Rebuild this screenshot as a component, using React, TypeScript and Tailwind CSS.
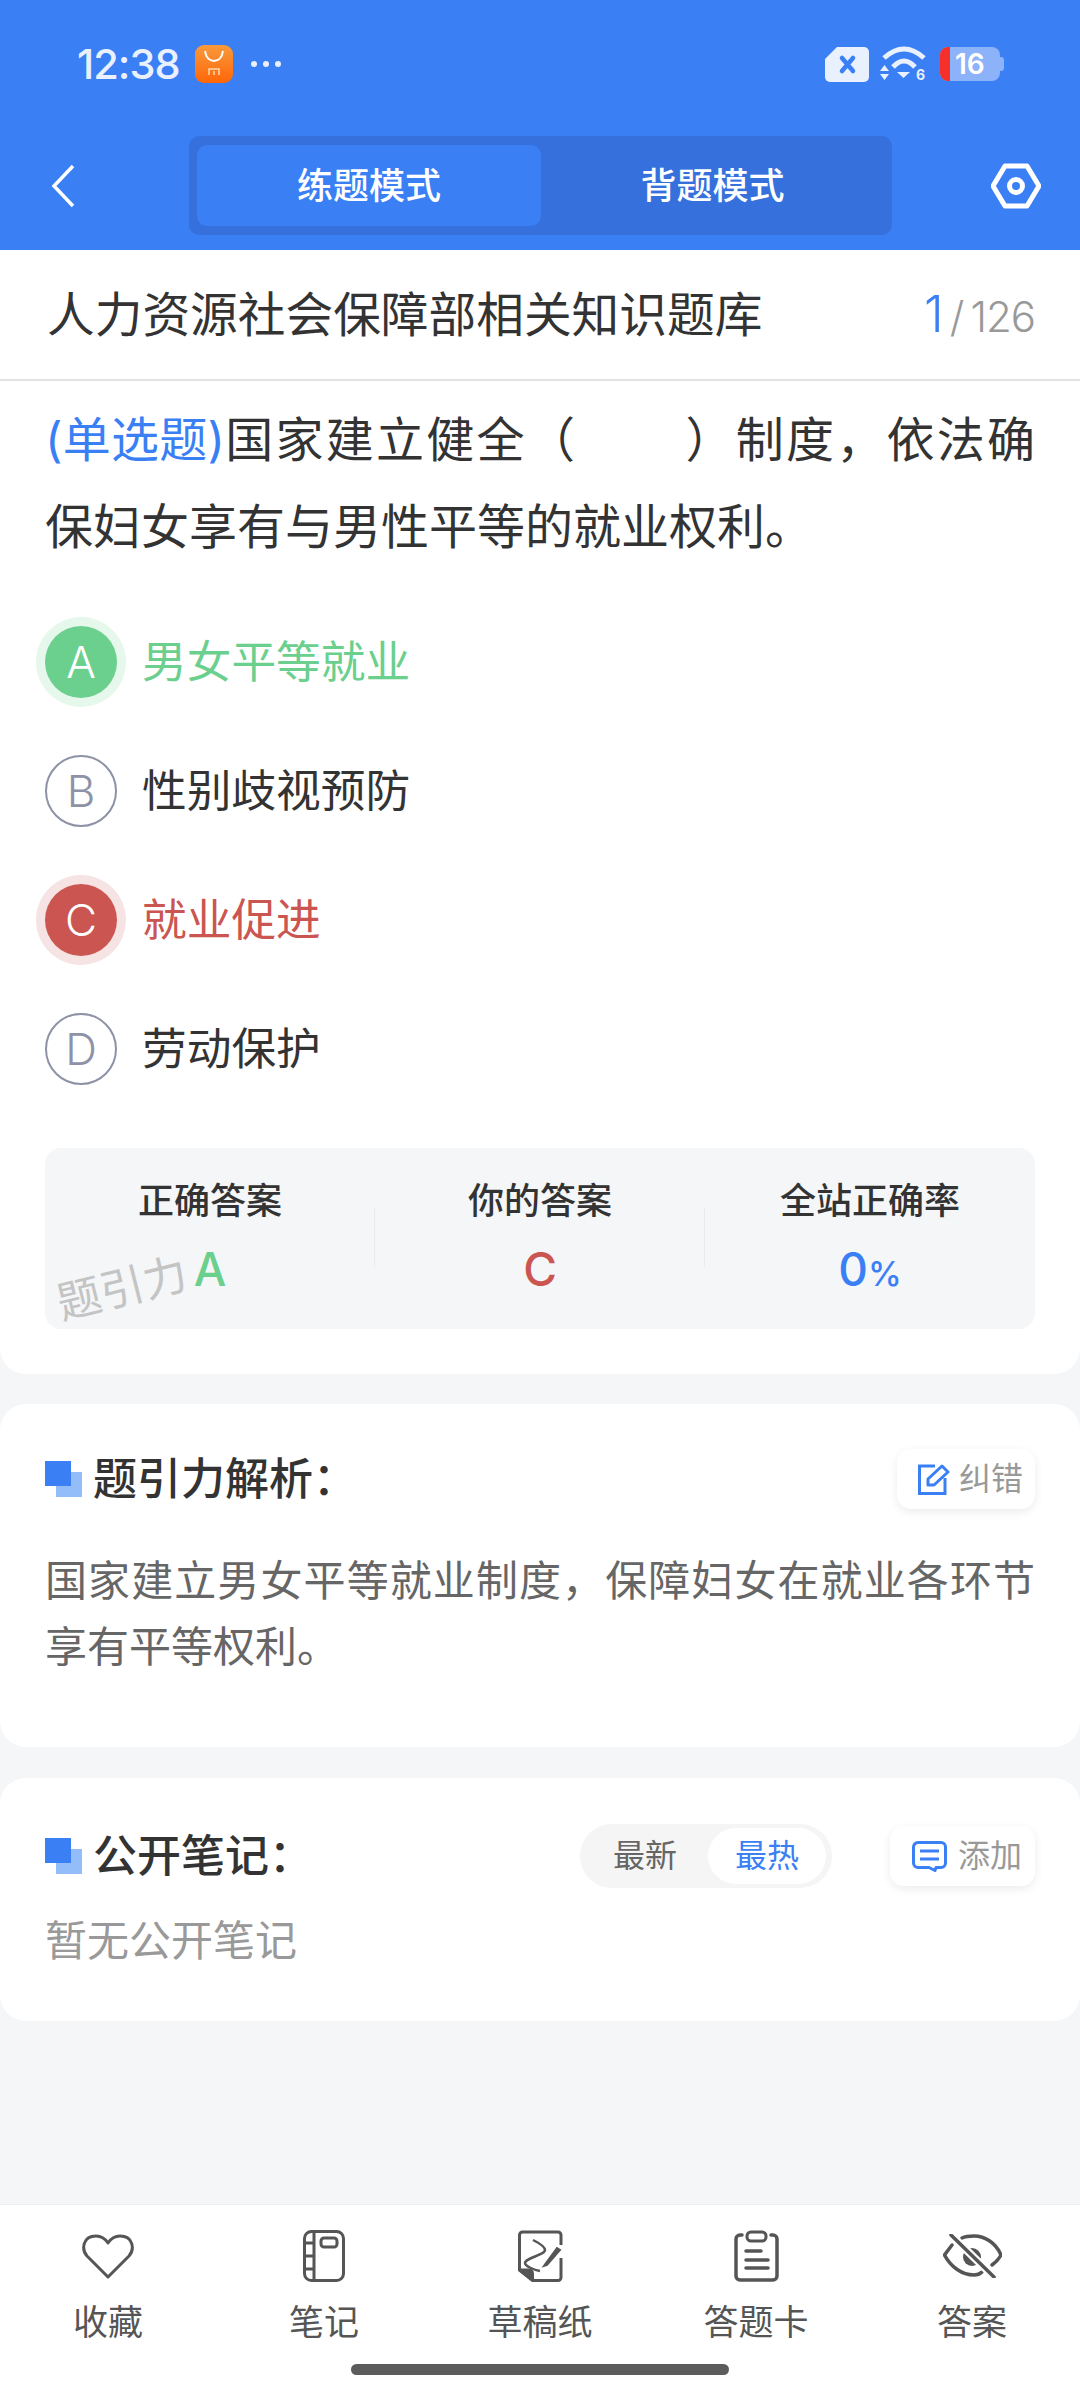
const cjk = "font-['Inter','Noto_Sans_CJK_SC',sans-serif]";

const options = [
  { key: "A", text: "男女平等就业", state: "right" },
  { key: "B", text: "性别歧视预防", state: "none" },
  { key: "C", text: "就业促进", state: "wrong" },
  { key: "D", text: "劳动保护", state: "none" },
];

function HeadMark() {
  return (
    <span className="relative block h-[36px] w-[37px] shrink-0">
      <span className="absolute left-[11px] top-[11px] h-[25px] w-[26px] bg-[#93bdf9]" />
      <span className="absolute left-0 top-0 h-[25px] w-[26px] bg-[#3b7ff5]" />
    </span>
  );
}

function Option({ item }: { item: (typeof options)[number] }) {
  const circle =
    item.state === "right"
      ? "bg-[#6bcf8e] text-white ring-[9px] ring-[#e6f7ec]"
      : item.state === "wrong"
        ? "bg-[#cb5550] text-white ring-[9px] ring-[#f6e3e3]"
        : "border-2 border-[#8e92a6] text-[#8e92a6]";
  const label =
    item.state === "right" ? "text-[#6bcf8e]" : item.state === "wrong" ? "text-[#cb5550]" : "text-[#333333]";
  return (
    <div className="flex h-[129px] items-center">
      <div className={`flex h-[72px] w-[72px] shrink-0 items-center justify-center rounded-full text-[44px] font-light ${circle}`}>
        {item.key}
      </div>
      <div className={`ml-[25px] pt-[2px] text-[44.700px] leading-none ${label}`}>{item.text}</div>
    </div>
  );
}

function Stat({ title, children, line }: { title: string; children: React.ReactNode; line?: boolean }) {
  return (
    <div className="relative flex flex-1 flex-col items-center pt-[30px]">
      <div className="text-[36px] font-medium leading-[46px] text-[#333333]">{title}</div>
      <div className="mt-[22px] text-[46px] font-medium leading-[46px]">{children}</div>
      {line && <span className="absolute right-0 top-[60px] h-[59px] w-px bg-[#e8eaed]" />}
    </div>
  );
}

function NavItem({ label, children }: { label: string; children: React.ReactNode }) {
  return (
    <div className="flex flex-1 flex-col items-center">
      <div className="flex h-[56px] items-center justify-center">{children}</div>
      <div className="mt-[15px] text-[35px] leading-[46px] text-[#555555]">{label}</div>
    </div>
  );
}

export default function App() {
  return (
    <div className={`flex h-[2400px] w-[1080px] flex-col overflow-hidden bg-[#f4f6f8] ${cjk}`}>
      {/* header */}
      <div className="h-[250px] shrink-0 bg-[#3b7ff5]">
        <div className="flex h-[136px] items-start justify-between pl-[77px] pr-[80px] pt-[45px]">
          <div className="flex items-center">
            <span className="font-['Inter'] text-[41.500px] font-medium leading-[37px] tracking-[-1px] text-[#e9f0fe]">12:38</span>
            <svg className="ml-[15px]" width="38" height="38" viewBox="0 0 38 38">
              <defs>
                <linearGradient id="mi" x1="0" y1="0" x2="0" y2="1">
                  <stop offset="0" stopColor="#f79a3c" />
                  <stop offset="1" stopColor="#ff6608" />
                </linearGradient>
              </defs>
              <rect width="38" height="38" rx="9" fill="url(#mi)" />
              <path d="M10 6c1 7 5 10 9 10s8-3 9-10" fill="none" stroke="#fff" strokeWidth="2" />
              <path d="M14 30v-6h10v6M19 26v4" fill="none" stroke="#ffd9b0" strokeWidth="1.500" />
            </svg>
            <svg className="ml-[17px]" width="32" height="8" viewBox="0 0 32 8" fill="#e9f0fe">
              <circle cx="4" cy="4" r="3" />
              <circle cx="16" cy="4" r="3" />
              <circle cx="28" cy="4" r="3" />
            </svg>
          </div>
          <div className="flex items-center">
            <svg width="44" height="35" viewBox="0 0 44 35">
              <path d="M12 0h27a5 5 0 0 1 5 5v25a5 5 0 0 1-5 5H5a5 5 0 0 1-5-5V12z" fill="#e9f0fe" />
              <path d="M17 11l11 13M28 11L17 24" stroke="#3b7ff5" strokeWidth="4.500" strokeLinecap="round" />
            </svg>
            <svg className="ml-[11px]" width="47" height="38" viewBox="0 0 47 38" fill="#e9f0fe">
              <path d="M4 13Q24-5 44 13" fill="none" stroke="#e9f0fe" strokeWidth="5" />
              <path d="M13 22Q24 10 35 22" fill="none" stroke="#e9f0fe" strokeWidth="5" />
              <path d="M17 27h13l-6.500 6z" />
              <path d="M4.500 20l4.500 6H0zM4.500 35L9 29H0z" />
              <text x="36" y="35" fontSize="14" fontWeight="700" fontFamily="Inter">6</text>
            </svg>
            <div className="relative ml-[13px] flex h-[34px] w-[60px] items-center rounded-[8px] bg-[#8cb2fa]">
              <span className="absolute left-0 top-0 h-[34px] w-[10px] rounded-l-[8px] bg-[#f5302a]" />
              <span className="ml-[15px] font-['Inter'] text-[28px] font-semibold leading-none text-white">16</span>
              <span className="absolute -right-[4px] top-[10px] h-[14px] w-[4px] rounded-r-[3px] bg-[#8cb2fa]" />
            </div>
          </div>
        </div>
        <div className="flex items-start">
          <div className="flex h-[99px] w-[189px] items-center pl-[50px]">
            <svg width="26" height="44" viewBox="0 0 26 44" fill="none" stroke="#ffffff" strokeWidth="3.500">
              <path d="M23 2L4 22l19 20" />
            </svg>
          </div>
          <div className="flex h-[99px] w-[703px] items-center rounded-[10px] bg-[#3670dd] px-[8px]">
            <div className="flex h-[81px] w-[344px] items-center justify-center rounded-[10px] bg-[#3b7ff5] text-[36px] font-medium text-white">
              练题模式
            </div>
            <div className="flex h-[81px] flex-1 items-center justify-center text-[36px] font-medium text-white">背题模式</div>
          </div>
          <div className="flex h-[99px] flex-1 items-center justify-end pr-[39px]">
            <svg width="50" height="46" viewBox="0 0 50 46" fill="none" stroke="#ffffff" strokeWidth="5" strokeLinejoin="round">
              <path d="M14 3h22l12 20-12 20H14L2 23z" />
              <circle cx="25" cy="23" r="6.500" />
            </svg>
          </div>
        </div>
      </div>

      {/* question card */}
      <div className="h-[1124px] shrink-0 rounded-b-[26px] bg-white">
        <div className="flex h-[131px] items-center justify-between border-b-2 border-[#e2e2e2] pl-[47px] pr-[45px]">
          <div className="pt-[2px] text-[47.700px] leading-none text-[#333333]">人力资源社会保障部相关知识题库</div>
          <div className="flex items-baseline font-['Inter'] text-[#999999]">
            <span className="text-[50px] font-light text-[#3b7ff5]">1</span>
            <span className="ml-[6px] text-[42px] font-light">/</span>
            <span className="ml-[6px] text-[42px] font-light tracking-[-1px]">126</span>
          </div>
        </div>
        <div className="px-[45px] pt-[15px]">
          <p className="text-justify text-[48px] leading-[87px] text-[#333333]">
            <span className="tracking-[-2px] text-[#3b7ff5]">(单选题)</span>国家建立健全（<span className="inline-block w-[106px]" />）制度，依法确保妇女享有与男性平等的就业权利。
          </p>
          <div className="mt-[27px]">
            {options.map((o) => (
              <Option key={o.key} item={o} />
            ))}
          </div>
          <div className="relative mt-[35px] flex h-[181px] rounded-[16px] bg-[#f4f6f8]">
            <Stat title="正确答案" line>
              <span className="text-[#6bcf8e]">A</span>
            </Stat>
            <Stat title="你的答案" line>
              <span className="text-[#cb5550]">C</span>
            </Stat>
            <Stat title="全站正确率">
              <span className="text-[#3b7ff5]">0</span>
              <span className="text-[34px] text-[#3b7ff5]">%</span>
            </Stat>
            <span className="absolute left-[11px] top-[118px] -rotate-[14deg] text-[44px] leading-none text-[#c4c4c4]">题引力</span>
          </div>
        </div>
      </div>

      {/* analysis */}
      <div className="mt-[30px] h-[343px] shrink-0 rounded-[26px] bg-white px-[45px] pt-[45px]">
        <div className="flex items-center justify-between">
          <div className="flex items-center">
            <HeadMark />
            <span className="ml-[11px] text-[44px] font-medium leading-[60px] text-[#333333]">题引力解析：</span>
          </div>
          <div className="flex h-[60px] w-[138px] items-center rounded-[14px] bg-white pl-[21px] text-[32px] text-[#999999] shadow-[0_3px_10px_rgba(0,0,0,0.08)]">
            <svg className="mr-[9px]" width="32" height="31" viewBox="0 0 32 31" fill="none" stroke="#3b7ff5" strokeWidth="3">
              <path d="M17 2H1.500v27.500H27V14" />
              <path d="M10 15L24 2l6 6-14 13h-6z" strokeLinejoin="round" />
            </svg>
            纠错
          </div>
        </div>
        <p className="mt-[39px] text-justify text-[42px] leading-[66px] text-[#666666]">
          国家建立男女平等就业制度，保障妇女在就业各环节享有平等权利。
        </p>
      </div>

      {/* notes */}
      <div className="mt-[31px] h-[243px] shrink-0 rounded-[26px] bg-white px-[45px] pt-[46px]">
        <div className="flex items-center">
          <HeadMark />
          <span className="ml-[11px] text-[44px] font-medium leading-[64px] text-[#333333]">公开笔记：</span>
          <div className="ml-auto flex h-[64px] w-[252px] items-center rounded-full bg-[#f5f5f5] pl-[33px] pr-[6px] text-[32px] text-[#666666]">
            <span>最新</span>
            <span className="ml-[31px] flex h-[56px] w-[118px] items-center justify-center rounded-full bg-white text-[#3b7ff5]">最热</span>
          </div>
          <div className="ml-[58px] flex h-[60px] w-[145px] items-center rounded-[14px] bg-white pl-[22px] text-[32px] text-[#999999] shadow-[0_3px_10px_rgba(0,0,0,0.08)]">
            <svg className="mr-[11px]" width="35" height="31" viewBox="0 0 35 31" fill="none" stroke="#3b7ff5" strokeWidth="3">
              <path d="M6 1.500h23a4.500 4.500 0 0 1 4.500 4.500v16a4.500 4.500 0 0 1-4.500 4.500h-5l-1 3-6-3H6A4.500 4.500 0 0 1 1.500 22V6A4.500 4.500 0 0 1 6 1.500z" strokeLinejoin="round" />
              <path d="M8 10h19M8 18h19" />
            </svg>
            添加
          </div>
        </div>
        <p className="mt-[20px] text-[42px] leading-[66px] text-[#999999]">暂无公开笔记</p>
      </div>

      <div className="flex-1" />

      {/* bottom nav */}
      <div className="h-[196px] shrink-0 border-t border-[#eeeeee] bg-white pt-[23px]">
        <div className="flex">
          <NavItem label="收藏">
            <svg width="52" height="46" viewBox="0 0 52 46" fill="none" stroke="#555555" strokeWidth="3" strokeLinejoin="round">
              <path d="M26 44L5 23C-1 16 1 3 14 3c6 0 10 4 12 7 2-3 6-7 12-7 13 0 15 13 9 20z" />
            </svg>
          </NavItem>
          <NavItem label="笔记">
            <svg width="42" height="52" viewBox="0 0 42 52" fill="none" stroke="#555555" strokeWidth="3">
              <rect x="1.500" y="1.500" width="39" height="49" rx="7" />
              <path d="M11 2v48M2 13h9M2 26h9M2 39h9" />
              <rect x="18" y="8" width="16" height="9" rx="3" />
            </svg>
          </NavItem>
          <NavItem label="草稿纸">
            <svg width="45" height="52" viewBox="0 0 45 52" fill="none" stroke="#555555" strokeWidth="3">
              <path d="M43 15V5a3 3 0 0 0-3-3H4.500a3 3 0 0 0-3 3v35l13 10.500H40a3 3 0 0 0 3-3V28" />
              <path d="M1.500 40h9c3 0 4 2 4 4v6z" fill="#555555" />
              <path d="M15 10c4 2 12 6 12 10 0 5-20 8-20 13 0 3 9 7 15 8" strokeWidth="2.500" />
              <path d="M28 33l-2 3 3-1 13-15-3-2z" fill="#555555" strokeWidth="2" />
            </svg>
          </NavItem>
          <NavItem label="答题卡">
            <svg width="45" height="52" viewBox="0 0 45 52" fill="none" stroke="#555555" strokeWidth="3.500" strokeLinecap="round">
              <path d="M8 5H6a4 4 0 0 0-4 4v37a4 4 0 0 0 4 4h33a4 4 0 0 0 4-4V9a4 4 0 0 0-4-4h-2" />
              <rect x="13" y="2" width="19" height="9" rx="4" strokeWidth="3" />
              <path d="M12 21h15M12 30h22M12 38h22" />
            </svg>
          </NavItem>
          <NavItem label="答案">
            <svg width="59" height="44" viewBox="0 0 59 44" fill="none" stroke="#555555" strokeWidth="3.500" strokeLinecap="round">
              <path d="M9 11L1.500 21C8 33 19 41 31 41c3 0 6-1 8-3M19 4c4-2 8-2 12-2 11 0 22 7 27 19-2 4-5 7-9 10" />
              <circle cx="29" cy="23" r="9" fill="#555555" stroke="none" />
              <path d="M8 1l43 42" stroke="#ffffff" strokeWidth="8" />
              <path d="M8 1l43 42" />
            </svg>
          </NavItem>
        </div>
        <div className="mx-auto mt-[19px] h-[11px] w-[378px] rounded-full bg-[#5c5c5c]" />
      </div>
    </div>
  );
}
